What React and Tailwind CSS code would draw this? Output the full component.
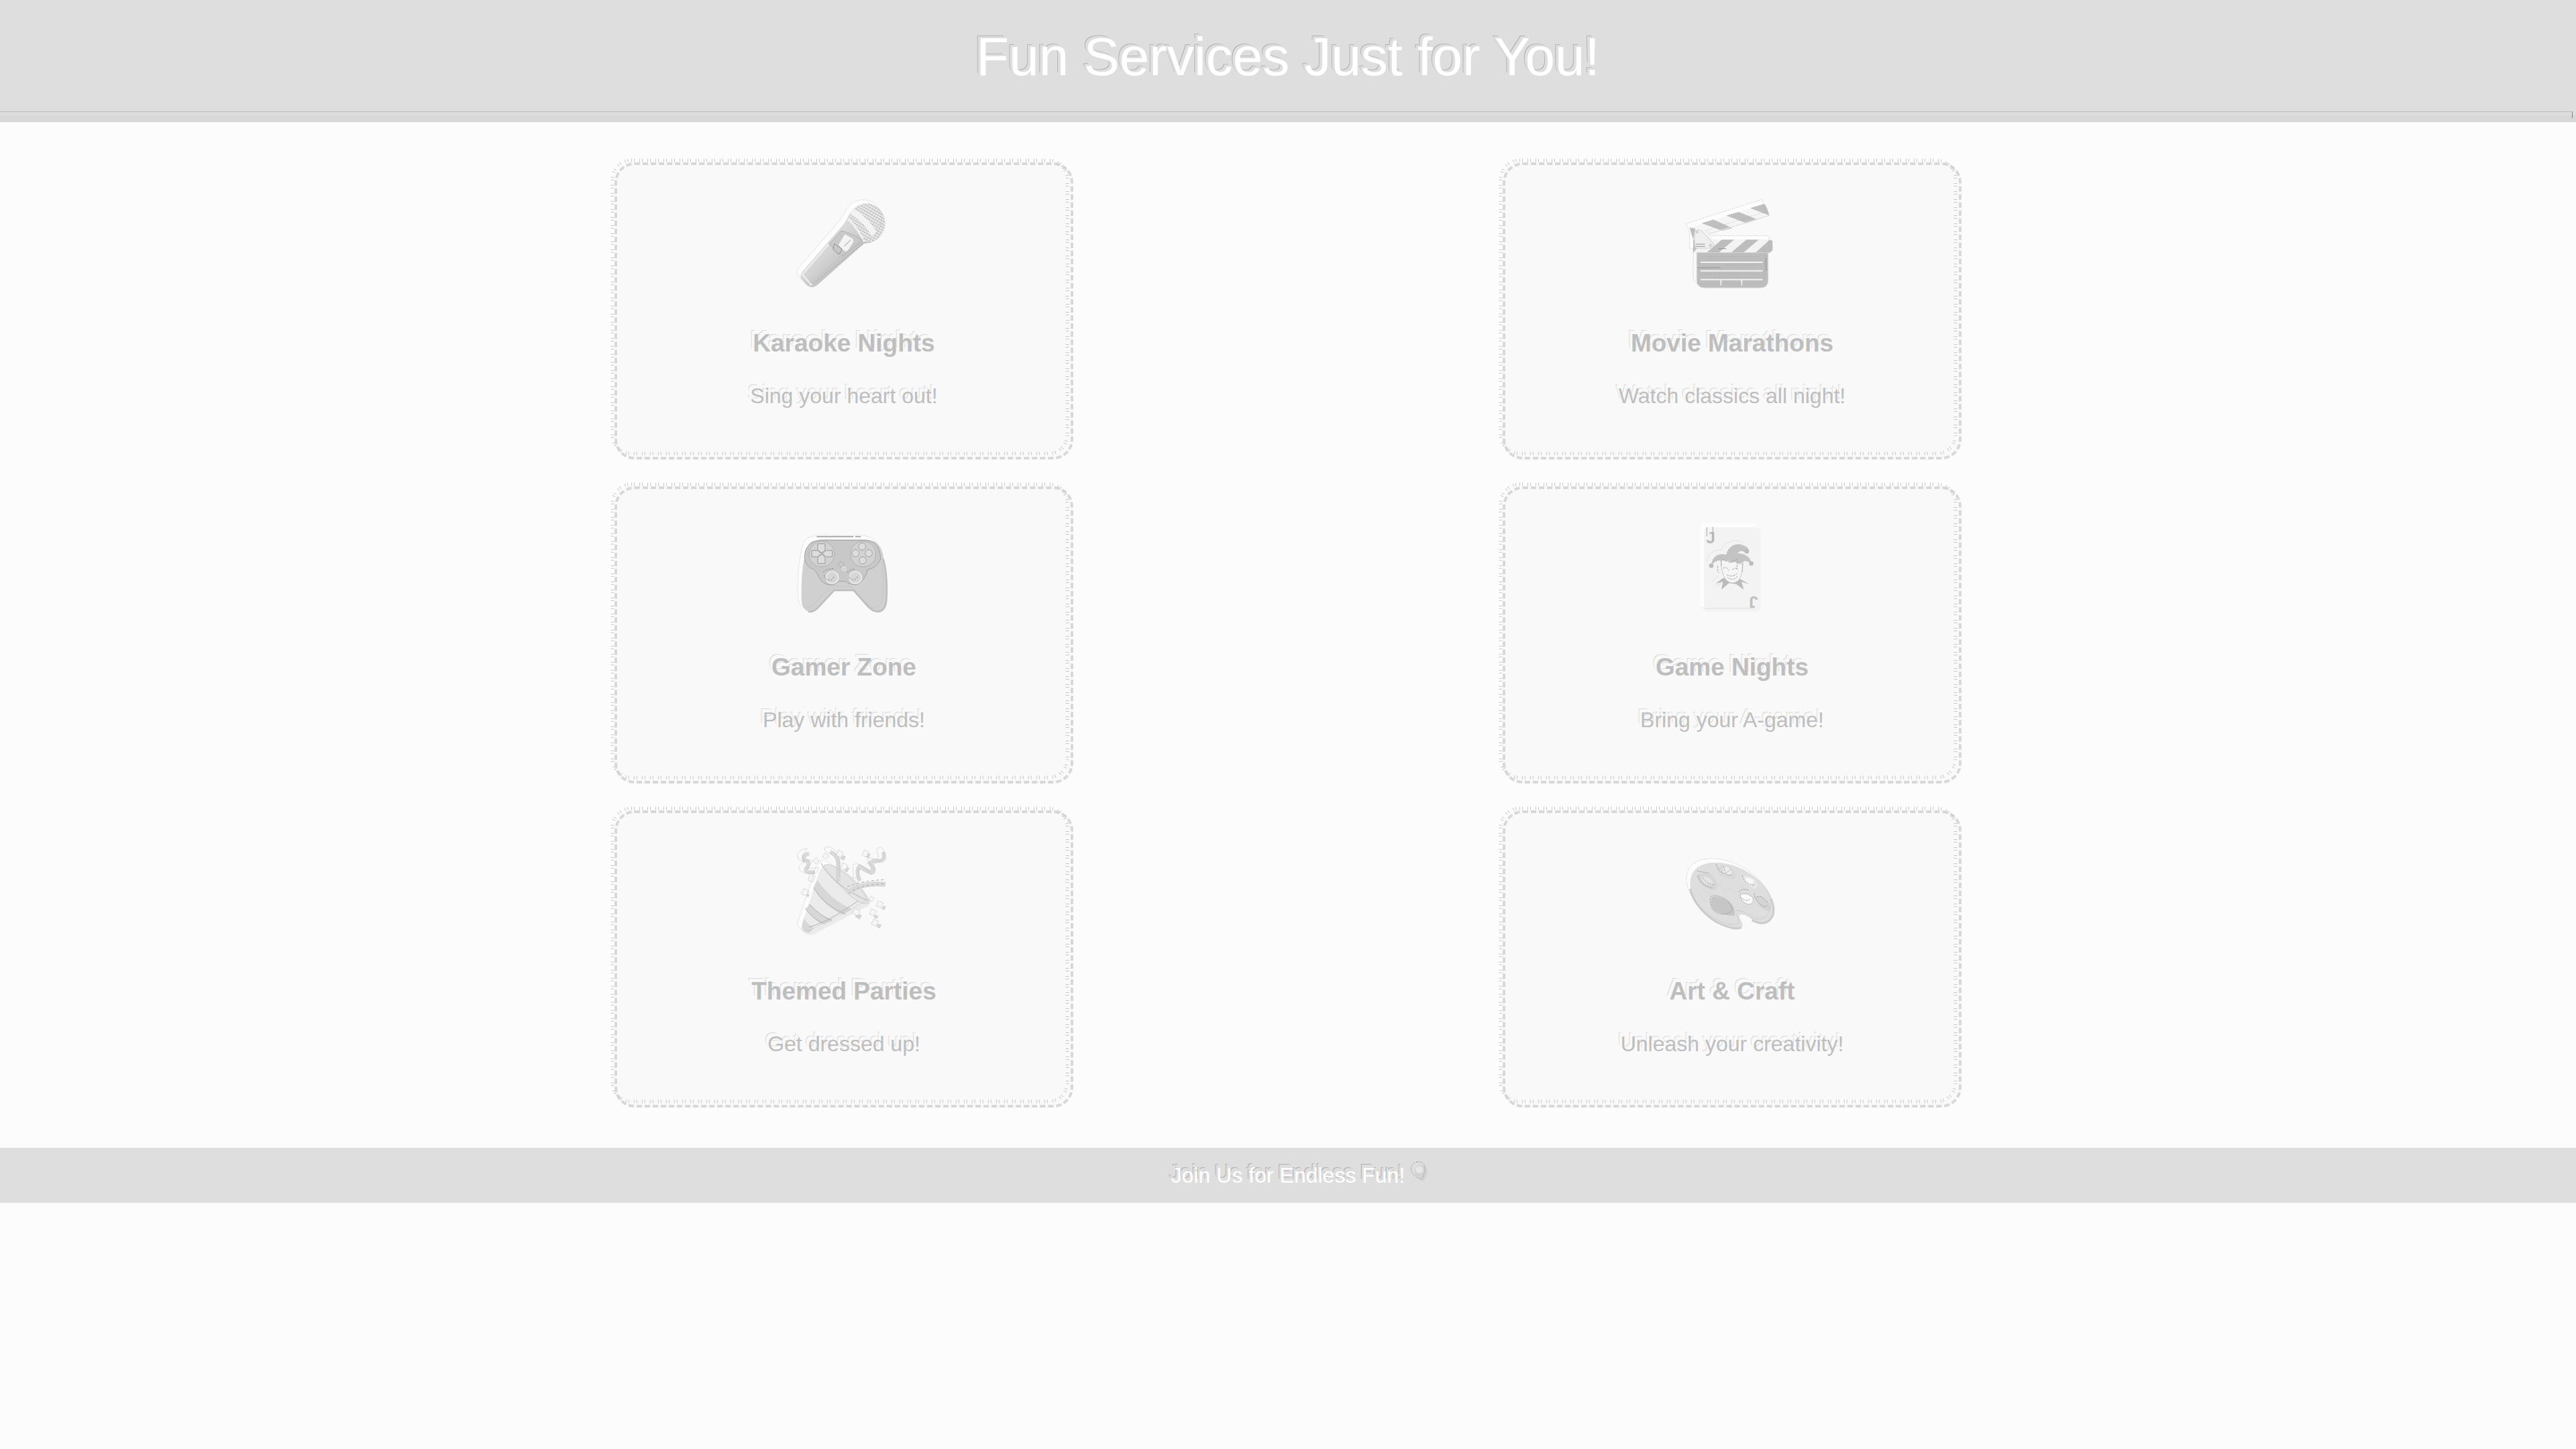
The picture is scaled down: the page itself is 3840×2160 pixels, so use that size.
const MIC = 'M322 112C345 75 400 58 440 85C478 110 490 165 465 205C445 235 415 250 385 248L178 432Q150 455 128 436L108 412Q92 398 108 375L295 160Z';
const CLAPPER = 'M86 178L425 70L443 124L172 210L195 232H450Q457 232 457 240V278Q457 290 437 290V412Q437 447 402 447H153Q118 447 118 412V290H102V215Z';
const PAD = 'M150 112Q190 98 240 103H345Q395 98 430 112Q465 130 472 190Q490 260 484 370Q482 418 450 425Q425 428 400 400L338 330H250L185 400Q160 430 135 425Q106 415 104 370Q102 250 118 180Q125 130 150 112Z';
const CARD = 'M170 78H383Q403 78 403 98V435Q403 455 383 455H170Q150 455 150 435V98Q150 78 170 78Z';
const CONE = 'M205 150Q218 140 245 158C310 195 375 255 410 312Q414 325 400 332L160 458Q138 468 118 452Q96 440 106 415L175 205Q185 165 205 150Z';
const PALETTE = 'M120 130C165 95 265 100 345 150C425 195 480 280 460 335C450 385 405 390 365 362C345 345 325 335 310 342C300 352 328 375 322 393C312 412 255 402 205 370C140 330 95 265 88 210Q86 155 120 130Z';

// Raised silhouette: a white rim and a dotted contour behind the body
function Raised({ d, fill }) {
  return (
    <>
      <g transform="translate(-16 -18)">
        <path d={d} fill="#fdfdfd" />
      </g>
      <path d={d} fill={fill} />
    </>
  );
}

function Contour({ d }) {
  return (
    <path d={d} transform="translate(-16 -18)" fill="none" stroke="#a8a8a8" strokeWidth="2.5" strokeDasharray="3 6" />
  );
}

function Microphone() {
  return (
    <>
      <defs>
        <linearGradient id="handle" x1="0" y1="0" x2="1" y2="1">
          <stop offset="0.35" stopColor="#dedede" />
          <stop offset="0.5" stopColor="#d0d0d0" />
          <stop offset="0.65" stopColor="#bcbcbc" />
        </linearGradient>
        <pattern id="mesh" width="12" height="12" patternUnits="userSpaceOnUse" patternTransform="rotate(30)">
          <rect width="12" height="12" fill="#e8e8e8" />
          <rect width="8" height="6" fill="#bdbdbd" />
        </pattern>
      </defs>
      <Raised d={MIC} fill="url(#handle)" />
      <path d="M335 100C370 60 420 60 450 95C485 130 485 180 462 208C445 235 415 250 385 240L312 140Z" fill="url(#mesh)" />
      <path d="M335 95Q390 120 440 195L420 220Q385 150 322 118Z" fill="#f3f3f3" />
      <path d="M312 140Q345 165 385 240" fill="none" stroke="#f0f0f0" strokeWidth="9" />
      <path d="M282 192Q310 195 378 235L290 305L228 252Z" fill="#c9c9c9" stroke="#b0b0b0" strokeWidth="3" />
      <path d="M298 208L330 225Q342 235 332 248L312 280Q305 288 292 278L270 255Z" fill="#f4f4f4" />
      <path d="M325 232L295 262M252 250L285 275L272 298L245 275Z" fill="none" stroke="#909090" strokeWidth="3" />
      <path d="M225 252L108 388L150 436" fill="none" stroke="#efefef" strokeWidth="7" />
      <path d="M160 426L385 246" stroke="#8f8f8f" strokeWidth="3" strokeDasharray="4 8" />
      <Contour d={MIC} />
    </>
  );
}

function Clapper() {
  return (
    <>
      <Raised d="M86 178L425 70L443 124L172 210L195 232H457V290H102V215Z" fill="#f5f5f5" />
      <path d="M140 158L192 142L278 180L232 192ZM250 124L305 108L390 142L340 158ZM357 91L418 72Q430 76 443 124Z" fill="#bfbfbf" />
      <path d="M172 206L443 124" stroke="#e2e2e2" strokeWidth="4" />
      <path d="M102 232H457V290H102Z" fill="#f3f3f3" />
      <path d="M102 232H150L102 290ZM230 232H285L216 290H161ZM340 232H395L326 290H271ZM457 238V278L445 290H380L445 232Z" fill="#bdbdbd" />
      <path d="M118 290H437V412Q437 447 402 447H153Q118 447 118 412Z" fill="#bdbdbd" stroke="#d4d4d4" strokeWidth="3" />
      <path d="M135 333H413M135 371H413M135 410H413M226 410V436M319 410V436" fill="none" stroke="#f1f1f1" strokeWidth="6" />
      <path d="M86 178L112 182L102 232Z" fill="#bdbdbd" />
      <path d="M108 195Q125 182 140 192L195 252Q190 270 170 270H118Q108 270 108 258Z" fill="#efefef" stroke="#cccccc" strokeWidth="3" />
      <circle cx="120" cy="198" r="7" fill="#d2d2d2" />
      <circle cx="179" cy="257" r="7" fill="#d2d2d2" />
      <path d="M112 252H155M112 262H155M120 357H225M428 312V370M215 272H250" stroke="#929292" strokeWidth="3" />
      <path d="M175 308H395M250 345H395M132 385H395M190 402H395" stroke="#a9a9a9" strokeWidth="1.5" strokeDasharray="14 6" />
      <Contour d={CLAPPER} />
    </>
  );
}

function Gamepad() {
  return (
    <>
      <Raised d={PAD} fill="#d0d0d0" />
      <path d="M470 190Q490 260 484 370Q482 418 450 425Q425 428 400 400L338 330H250L185 400Q160 430 135 425" fill="none" stroke="#bfbfbf" strokeWidth="8" />
      <path d="M118 185Q118 115 185 106H395Q455 112 458 190Q440 232 400 237Q388 290 350 305Q315 305 305 290H270Q255 308 225 305Q195 300 180 265L162 237Q125 228 118 185Z" fill="#c8c8c8" stroke="#a2a2a2" strokeWidth="3" />
      <path d="M172 90H370" stroke="#999999" strokeWidth="4" strokeDasharray="165 8" />
      <circle cx="195" cy="168" r="57" fill="#d2d2d2" stroke="#b0b0b0" strokeWidth="3" />
      <circle cx="380" cy="168" r="57" fill="#d2d2d2" stroke="#b0b0b0" strokeWidth="3" />
      <path d="M177 122H210V150L195 163L177 150ZM177 210H210V182L195 168L177 182ZM150 152H178L192 166L178 180H150ZM242 152H214L198 166L214 180H242Z" fill="#dddddd" stroke="#999999" strokeWidth="3" />
      <g fill="#dddddd" stroke="#a0a0a0" strokeWidth="3">
        <circle cx="376" cy="134" r="16" />
        <circle cx="346" cy="164" r="16" />
        <circle cx="405" cy="164" r="16" />
        <circle cx="378" cy="196" r="16" />
      </g>
      <circle cx="282" cy="214" r="12" fill="none" stroke="#999999" strokeWidth="3" strokeDasharray="5 4" />
      <circle cx="294" cy="233" r="8" fill="#c8c8c8" stroke="#e6e6e6" strokeWidth="4" />
      <circle cx="242" cy="273" r="27" fill="#d6d6d6" stroke="#eeeeee" strokeWidth="5" />
      <circle cx="346" cy="273" r="27" fill="#d6d6d6" stroke="#eeeeee" strokeWidth="5" />
      <path d="M202 250Q208 236 248 232M205 262Q212 288 238 285L252 266M310 252Q318 234 345 236M318 270Q325 285 340 284L362 264" fill="none" stroke="#8f8f8f" strokeWidth="3" strokeDasharray="9 5" />
      <Contour d={PAD} />
    </>
  );
}

function Joker() {
  return (
    <>
      <Raised d={CARD} fill="#f3f3f3" />
      <g className="font-bold" fill="#c0c0c0" fontSize="74">
        <text x="160" y="149">J</text>
        <text x="-392" y="-386" transform="rotate(180)">J</text>
      </g>
      <path d="M163 78V118M190 76V135Q185 146 170 140" fill="none" stroke="#a6a6a6" strokeWidth="3" />
      <path d="M202 330L235 305L310 308L353 332L318 322L328 357L295 332L262 328L228 357L235 322Z" fill="#bbbbbb" />
      <path d="M225 222H325Q325 290 305 315Q275 340 248 312Q228 285 225 222Z" fill="#f5f5f5" stroke="#cccccc" strokeWidth="3" />
      <path d="M183 247C188 205 215 192 250 200C258 165 290 145 325 158Q350 165 350 184Q345 196 332 190Q315 175 300 194C335 195 358 210 362 238Q350 232 332 228L310 244Q290 228 275 236L260 228L232 226Q205 222 183 247Z" fill="#c3c3c3" />
      <circle cx="183" cy="250" r="10" fill="#bbbbbb" />
      <circle cx="342" cy="186" r="10" fill="#bbbbbb" />
      <circle cx="362" cy="240" r="10" fill="#bbbbbb" />
      <path d="M232 222L270 236L298 220V265M228 225V255M236 262Q250 250 262 272M278 268Q290 255 305 268M252 290Q280 305 300 282M255 302Q280 322 302 295M213 250Q206 270 218 282M322 240V275" fill="none" stroke="#a3a3a3" strokeWidth="3" strokeDasharray="10 4" />
      <path d="M165 228Q168 190 210 180H228Q240 145 285 138Q310 135 325 150M185 320L215 295M205 340L225 330M140 435Q155 448 175 440H375" fill="none" stroke="#b0b0b0" strokeWidth="2" strokeDasharray="4 5" />
    </>
  );
}

function Popper() {
  return (
    <>
      <Raised d={CONE} fill="#ebebeb" />
      <path d="M205 150Q225 135 280 170Q360 215 410 312Q400 328 365 315Q290 275 205 150Z" fill="#e4e4e4" stroke="#d0d0d0" strokeWidth="3" />
      <path d="M175 215Q235 305 330 345L290 370Q200 330 158 250ZM140 322Q185 375 245 395L205 415Q150 390 125 345ZM115 385Q130 415 160 428L138 452Q110 450 106 420Z" fill="#d7d7d7" />
      <path d="M192 140Q240 235 400 308M158 250Q210 335 302 368M142 325Q185 375 240 395M120 340Q150 385 200 410M140 425Q210 410 355 310" fill="none" stroke="#b0b0b0" strokeWidth="3" />
      <path d="M315 275Q360 225 480 235" fill="none" stroke="#dadada" strokeWidth="22" />
      <path d="M315 275Q360 238 480 232M310 245Q370 220 472 214" fill="none" stroke="#a8a8a8" strokeWidth="3" strokeDasharray="12 10" />
      <g fill="none" stroke="#d9d9d9" strokeWidth="18">
        <path d="M270 225V140Q265 100 232 90" />
        <path d="M365 220Q345 170 365 155L415 182Q440 175 410 140Q425 125 450 130Q485 130 470 90" />
        <path d="M138 97Q105 105 118 130Q150 130 125 165Q115 185 165 180" />
      </g>
      <g fill="none" stroke="#adadad" strokeWidth="2.5" strokeDasharray="4 5">
        <path d="M262 230V150Q262 110 225 95Q200 85 212 68Q235 62 262 90Q275 110 275 200" />
        <path d="M335 205V150Q345 135 375 152L405 178Q430 172 398 125Q410 110 440 125Q455 110 438 80Q455 60 470 80Q478 110 455 130L425 145Q445 185 420 190Q385 180 360 165L355 210Z" />
        <path d="M130 75Q95 75 85 105Q88 135 118 128L95 152Q90 175 115 182Q150 190 175 180L180 160L130 165L155 130L112 120Q105 100 130 75Z" />
      </g>
      <g fill="#d6d6d6">
        <path d="M285 105L303 108L295 128L276 120ZM300 155L320 162L308 182L292 172ZM395 93L414 100L405 120L390 112ZM345 365L375 372L365 392L345 380ZM470 330L483 335L475 350L462 345ZM430 370L450 376L440 390L428 385ZM445 410L463 415L454 433L440 425ZM125 275L142 280L132 296Z" />
      </g>
      <g fill="#f6f6f6" stroke="#b0b0b0" strokeWidth="2.5" strokeDasharray="4 4">
        <path d="M270 82L292 92L282 116L260 105ZM290 138L312 150L300 172L278 162ZM385 80L405 92L395 114L374 104ZM342 342L368 355L355 376L332 365ZM448 308L470 318L460 340L438 330ZM418 345L440 355L430 376L408 368ZM428 390L448 400L438 422L416 412ZM415 288L430 298L418 312L404 300ZM210 95L228 108L215 122L198 112ZM170 115L184 130L170 144L156 130ZM115 252L138 265L128 286L104 278ZM145 185L165 198L155 225L133 215Z" />
      </g>
      <Contour d={CONE} />
    </>
  );
}

function Palette() {
  return (
    <>
      <Raised d={PALETTE} fill="#dedede" />
      <path d="M88 225C105 290 155 345 215 378Q285 412 318 398M365 365Q430 400 458 345Q468 310 450 270" fill="none" stroke="#cccccc" strokeWidth="9" />
      <path d="M312 250Q340 240 368 262Q378 290 350 295Q312 285 312 250Z" fill="#fafafa" stroke="#bdbdbd" strokeWidth="3" />
      <path d="M120 165Q150 140 190 165Q215 195 210 225Q180 238 145 210Q120 190 120 165Z" fill="#d6d6d6" />
      <path d="M138 175Q165 160 190 195Q195 215 165 205Q140 195 138 175Z" fill="#e4e4e4" />
      <path d="M210 130Q245 105 280 140Q300 165 285 182Q250 185 220 160Z" fill="#d9d9d9" />
      <path d="M235 128Q260 120 275 150Q265 168 240 158Z" fill="#ededed" />
      <path d="M318 170Q350 160 380 185Q400 210 385 225Q345 220 318 170Z" fill="#e6e6e6" />
      <path d="M332 178Q355 170 372 190Q372 210 350 205Z" fill="#f8f8f8" />
      <path d="M185 260Q220 255 260 280Q295 310 285 345Q235 345 195 320Q175 295 185 260Z" fill="#c6c6c6" />
      <path d="M378 262Q410 255 445 290Q455 320 435 325Q395 310 378 262Z" fill="#d4d4d4" />
      <path d="M120 145Q145 150 175 155M122 165Q135 210 190 222M145 175Q165 205 200 208M205 115Q215 160 275 165M238 125L248 155L268 140M322 165Q330 205 375 208M178 262Q190 250 215 258Q260 265 278 318Q255 345 215 335Q175 320 178 262ZM305 240Q320 220 352 232M315 262Q335 285 355 272M375 245Q375 275 415 305L435 300M385 262Q410 250 438 290" fill="none" stroke="#a0a0a0" strokeWidth="3" strokeDasharray="9 4" />
      <path d="M150 230L190 250M210 200L250 230M255 215L290 245M300 200L330 225M130 250L165 285M300 320L375 345M380 350H425" stroke="#c4c4c4" strokeWidth="3" strokeDasharray="3 7" />
      <Contour d={PALETTE} />
    </>
  );
}

const services = [
  { Icon: Microphone, box: '9 18 570 507', title: 'Karaoke Nights', text: 'Sing your heart out!' },
  { Icon: Clapper, box: '-9 18 570 507', title: 'Movie Marathons', text: 'Watch classics all night!' },
  { Icon: Gamepad, box: '9 -3 570 507', title: 'Gamer Zone', text: 'Play with friends!' },
  { Icon: Joker, box: '-9 27 570 507', title: 'Game Nights', text: 'Bring your A-game!' },
  { Icon: Popper, box: '9 36 570 507', title: 'Themed Parties', text: 'Get dressed up!' },
  { Icon: Palette, box: '-9 6 570 507', title: 'Art & Craft', text: 'Unleash your creativity!' },
];

// Fine stitched line just outside the dashed card border
function Stitching() {
  return (
    <svg aria-hidden="true" className="pointer-events-none absolute -top-[10px] -left-[10px] h-full w-full overflow-visible">
      <rect
        x="3"
        y="3"
        rx="28"
        className="h-[calc(100%+2px)] w-[calc(100%+2px)] fill-none stroke-[#c8c8c8]"
        strokeWidth="5"
        strokeDasharray="1 3 1 7"
      />
    </svg>
  );
}

function Card({ Icon, box, title, text }) {
  return (
    <article className="relative w-full max-w-[684px] rounded-[30px] border-4 border-dashed border-[#d8d8d8] bg-[#f9f9f9] p-10 text-center">
      <Stitching />
      <svg aria-hidden="true" viewBox={box} className="mx-auto h-[169px] w-[190px] overflow-visible">
        <Icon />
      </svg>
      <h2 className="mt-[35px] mb-[39px] text-[37px] leading-[43px] font-bold [text-shadow:-4px_-5px_0_#f9f9f9,-5px_-6px_0_#dadada]">{title}</h2>
      <p className="mb-8 text-[32px] leading-[37px] [text-shadow:-4px_-5px_0_#f9f9f9,-5px_-6px_0_#dadada]">{text}</p>
    </article>
  );
}

function Balloon() {
  return (
    <svg aria-hidden="true" viewBox="0 0 84 100" className="absolute top-0 left-full ml-2 h-[33px] w-7 overflow-visible">
      <path d="M42 18Q75 14 78 45Q78 68 62 82L60 94L54 84Q22 75 20 48Q20 24 42 18Z" fill="#d2d2d2" />
      <ellipse cx="42" cy="38" rx="17" ry="16" fill="#e6e6e6" />
      <path d="M30 3Q64 0 67 28Q67 60 50 84Q8 65 4 36Q6 8 30 3Z" fill="none" stroke="#8f8f8f" strokeWidth="3" strokeDasharray="5 5" />
    </svg>
  );
}

export default function App() {
  return (
    <div className="min-h-screen bg-[#fcfcfc] font-['Liberation_Sans',Arial,sans-serif] text-[#bebebe]">
      <header className="border-b-10 border-[#d8d8d8] bg-[#dedede] text-center text-white">
        <h1 className="px-10 pt-[38px] pb-[35px] text-[80px] leading-[93px] [text-shadow:-4px_-3px_0_#dedede,-5px_-4px_0_#b4b4b4]">
          Fun Services Just for You!
        </h1>
        <div className="mr-[5px] -mb-1 h-[10px] border-t border-r border-t-[#bababa] border-r-[#808080]" />
      </header>
      <main className="mx-auto grid max-w-[2648px] grid-cols-2 justify-items-center gap-y-10 py-[60px]">
        {services.map((service) => (
          <Card key={service.title} {...service} />
        ))}
      </main>
      <footer className="bg-[#dedede] py-5 text-center text-[32px] leading-[42px] text-white">
        <p className="[text-shadow:-3px_-5px_0_#dedede,-4px_-6px_0_#b0b0b0]">
          <span className="relative inline-block">
            Join Us for Endless Fun!
            <Balloon />
          </span>
        </p>
      </footer>
    </div>
  );
}
